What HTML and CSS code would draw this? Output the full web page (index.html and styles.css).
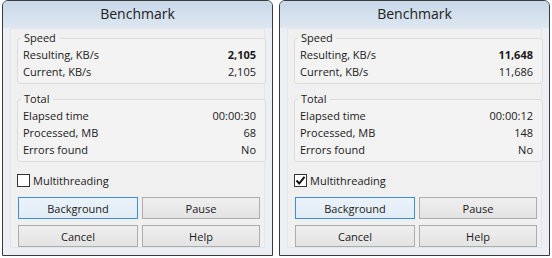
FILE: index.html
```html
<!DOCTYPE html>
<html>

<head>
    <title>Benchmark</title>
    <link rel="stylesheet" href="styles.css">
</head>

<body>
    <div class="desktop">
        <!-- Idle run, single thread -->
        <div class="window">
            <div class="titlebar">Benchmark</div>
            <div class="client">
                <fieldset class="group">
                    <legend>Speed</legend>
                    <div class="row"><span>Resulting, KB/s</span><span class="value bold">2,105</span></div>
                    <div class="row"><span>Current, KB/s</span><span class="value">2,105</span></div>
                </fieldset>
                <fieldset class="group">
                    <legend>Total</legend>
                    <div class="row"><span>Elapsed time</span><span class="value">00:00:30</span></div>
                    <div class="row"><span>Processed, MB</span><span class="value">68</span></div>
                    <div class="row"><span>Errors found</span><span class="value">No</span></div>
                </fieldset>
                <label class="check">
                    <span class="box"></span>
                    <span>Multithreading</span>
                </label>
                <div class="buttons">
                    <button class="btn default">Background</button>
                    <button class="btn">Pause</button>
                    <button class="btn">Cancel</button>
                    <button class="btn">Help</button>
                </div>
            </div>
        </div>

        <!-- Multithreaded run -->
        <div class="window">
            <div class="titlebar">Benchmark</div>
            <div class="client">
                <fieldset class="group">
                    <legend>Speed</legend>
                    <div class="row"><span>Resulting, KB/s</span><span class="value bold">11,648</span></div>
                    <div class="row"><span>Current, KB/s</span><span class="value">11,686</span></div>
                </fieldset>
                <fieldset class="group">
                    <legend>Total</legend>
                    <div class="row"><span>Elapsed time</span><span class="value">00:00:12</span></div>
                    <div class="row"><span>Processed, MB</span><span class="value">148</span></div>
                    <div class="row"><span>Errors found</span><span class="value">No</span></div>
                </fieldset>
                <label class="check">
                    <span class="box">
                        <svg width="11" height="11" viewBox="0 0 11 11">
                            <path d="M1.5 5.5 L4.2 8.5 L9.5 1.8" fill="none" stroke="#111" stroke-width="2"/>
                        </svg>
                    </span>
                    <span>Multithreading</span>
                </label>
                <div class="buttons">
                    <button class="btn default">Background</button>
                    <button class="btn">Pause</button>
                    <button class="btn">Cancel</button>
                    <button class="btn">Help</button>
                </div>
            </div>
        </div>
    </div>
</body>

</html>
```

FILE: styles.css
```css
body {
    margin: 0;
    background: #ffffff;
    font-family: 'Open Sans', 'Noto Sans', Arial, sans-serif;
    font-size: 11px;
    color: #1a1a1a;
}

.desktop {
    display: flex;
    gap: 6px;
    padding-left: 2px;
}

.window {
    width: 269px;
    height: 254px;
    border: 1px solid #3a3a3a;
    border-radius: 6px 6px 0 0;
    background: #eceff3;
    display: flex;
    flex-direction: column;
}

.titlebar {
    height: 27px;
    line-height: 26px;
    text-align: center;
    font-size: 14px;
    color: #222;
    border-radius: 5px 5px 0 0;
    background: linear-gradient(#c8d8e9, #dde7f1);
}

.client {
    flex: 1;
    margin: 0 7px 7px 7px;
    background: #f0f0f0;
    border: 1px solid #e2e5e9;
    padding: 1px 0 0 6px;
}

.group {
    width: 233px;
    margin: 0 0 7px 0;
    padding: 0 9px 3px 5px;
    border: 1px solid #dcdcdc;
    border-radius: 3px;
    background: #f3f3f3;
}

.group legend {
    padding: 0 3px;
    margin-left: -2px;
    line-height: 16px;
}

.row {
    display: flex;
    justify-content: space-between;
    height: 17px;
    line-height: 17px;
}

.value.bold {
    font-weight: bold;
}

.check {
    display: flex;
    align-items: center;
    gap: 3px;
    margin-top: 11px;
    height: 15px;
}

.check .box {
    width: 11px;
    height: 11px;
    border: 1px solid #333;
    background: #fff;
    display: flex;
    align-items: center;
    justify-content: center;
}

.buttons {
    display: grid;
    grid-template-columns: 120px 118px;
    column-gap: 4px;
    row-gap: 6px;
    margin-top: 9px;
    margin-left: 1px;
}

.btn {
    height: 22px;
    padding: 0;
    font-family: inherit;
    font-size: 11px;
    color: #1a1a1a;
    border: 1px solid #adadad;
    background: linear-gradient(#efefef, #e3e3e3);
}

.btn.default {
    border-color: #3c8fd6;
    background: linear-gradient(#eaf3fb, #e2ecf5);
}
```
